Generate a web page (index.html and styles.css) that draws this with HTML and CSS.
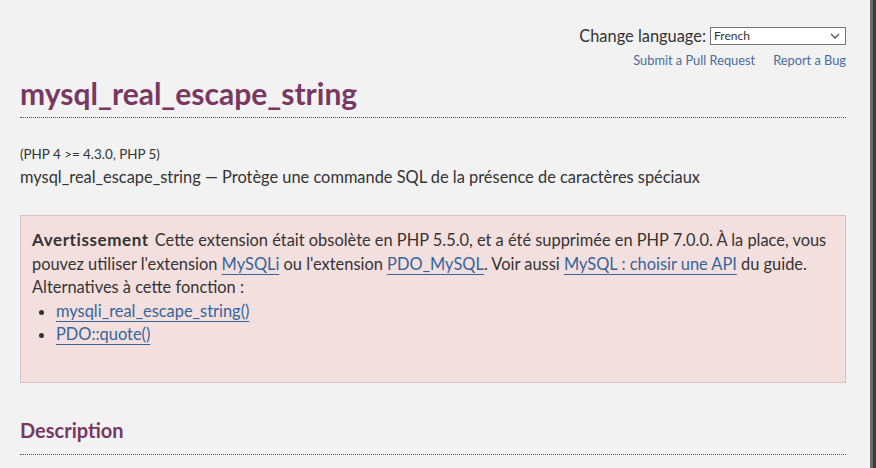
FILE: index.html
```html
<!DOCTYPE html>
<html lang="fr">
<head>
<meta charset="utf-8">
<title>mysql_real_escape_string</title>
<link rel="stylesheet" href="styles.css">
</head>
<body>
<div class="page">
  <div class="tools">
    <div class="lang">
      <label class="lang-label" for="lang">Change language:</label>
      <div class="select"><span>French</span><svg class="chev" width="10" height="6" viewBox="0 0 10 6"><path d="M1 1l4 4 4-4" fill="none" stroke="#555" stroke-width="1.3"/></svg></div>
    </div>
    <div class="edit">
      <a href="#">Submit a Pull Request</a>
      <a href="#">Report a Bug</a>
    </div>
  </div>
  <h1 class="refname">mysql_real_escape_string</h1>
  <p class="verinfo">(PHP 4 &gt;= 4.3.0, PHP 5)</p>
  <p class="refpurpose">mysql_real_escape_string — Protège une commande SQL de la présence de caractères spéciaux</p>
  <div class="warning">
    <p><strong class="wtitle">Avertissement</strong>Cette extension était obsolète en PHP 5.5.0, et a été supprimée en PHP 7.0.0. À la place, vous pouvez utiliser l'extension <a href="#">MySQLi</a> ou l'extension <a href="#">PDO_MySQL</a>. Voir aussi <a href="#">MySQL : choisir une API</a> du guide.</p>
    <p>Alternatives à cette fonction :</p>
    <ul>
      <li><a href="#">mysqli_real_escape_string()</a></li>
      <li><a href="#">PDO::quote()</a></li>
    </ul>
  </div>
  <h2 class="title">Description</h2>
</div>
<div class="scrollbar"></div>
</body>
</html>
```
FILE: styles.css
```css
html, body {
  margin: 0;
  padding: 0;
  height: 100%;
  overflow: hidden;
}
body {
  background: #f2f2f2;
  color: #333;
  font-family: "Lato", "Open Sans", sans-serif;
  font-size: 16.4px;
  line-height: 24px;
  display: flex;
}
.page {
  flex: 1;
  padding: 0 24px 0 20px;
  min-width: 0;
}
.scrollbar {
  width: 6px;
  background: linear-gradient(to right, #6b6b6b 0 3px, #3a3a3a 3px);
}
.tools {
  display: flex;
  flex-direction: column;
  align-items: flex-end;
  padding-top: 24px;
}
.lang {
  display: flex;
  align-items: center;
  gap: 4px;
}
.lang-label {
  font-size: 16.4px;
}
.select {
  height: 16px;
  border: 1px solid #767676;
  background: #fff;
  font-size: 12px;
  line-height: 16px;
  display: flex;
  align-items: center;
  justify-content: space-between;
  padding: 0 5px 0 3px;
  box-sizing: content-box;
  width: 126px;
}
.edit {
  display: flex;
  gap: 18px;
  font-size: 12.8px;
  line-height: 20px;
  margin-top: 2px;
}
a {
  color: #369;
  text-decoration: underline;
  text-decoration-thickness: 1px;
  text-underline-offset: 4px;
}
.edit a {
  color: #4a6c9a;
  text-decoration: none;
}
.refname {
  margin: 4px 0 0;
  font-size: 30px;
  line-height: 38px;
  font-weight: 700;
  color: #793862;
  padding-bottom: 5px;
  border-bottom: 1px dotted #793862;
}
.verinfo {
  margin: 26px 0 0;
  font-size: 13.4px;
  line-height: 20px;
}
.refpurpose {
  margin: 1px 0 0;
}
.warning {
  margin-top: 26px;
  background: #f4dfdf;
  border: 1px solid #d9c0c0;
  padding: 12px 11px 12px;
  line-height: 23.5px;
}
.warning p { margin: 0; }
.wtitle {
  font-size: 17px;
  letter-spacing: 0.6px;
  margin-right: 6px;
}
.warning ul {
  margin: 0 0 24px;
  padding-left: 24px;
}
.title {
  margin: 33px 0 0;
  font-size: 20px;
  line-height: 28px;
  font-weight: 700;
  color: #793862;
  padding-bottom: 10px;
  border-bottom: 1px dotted #793862;
}
```
